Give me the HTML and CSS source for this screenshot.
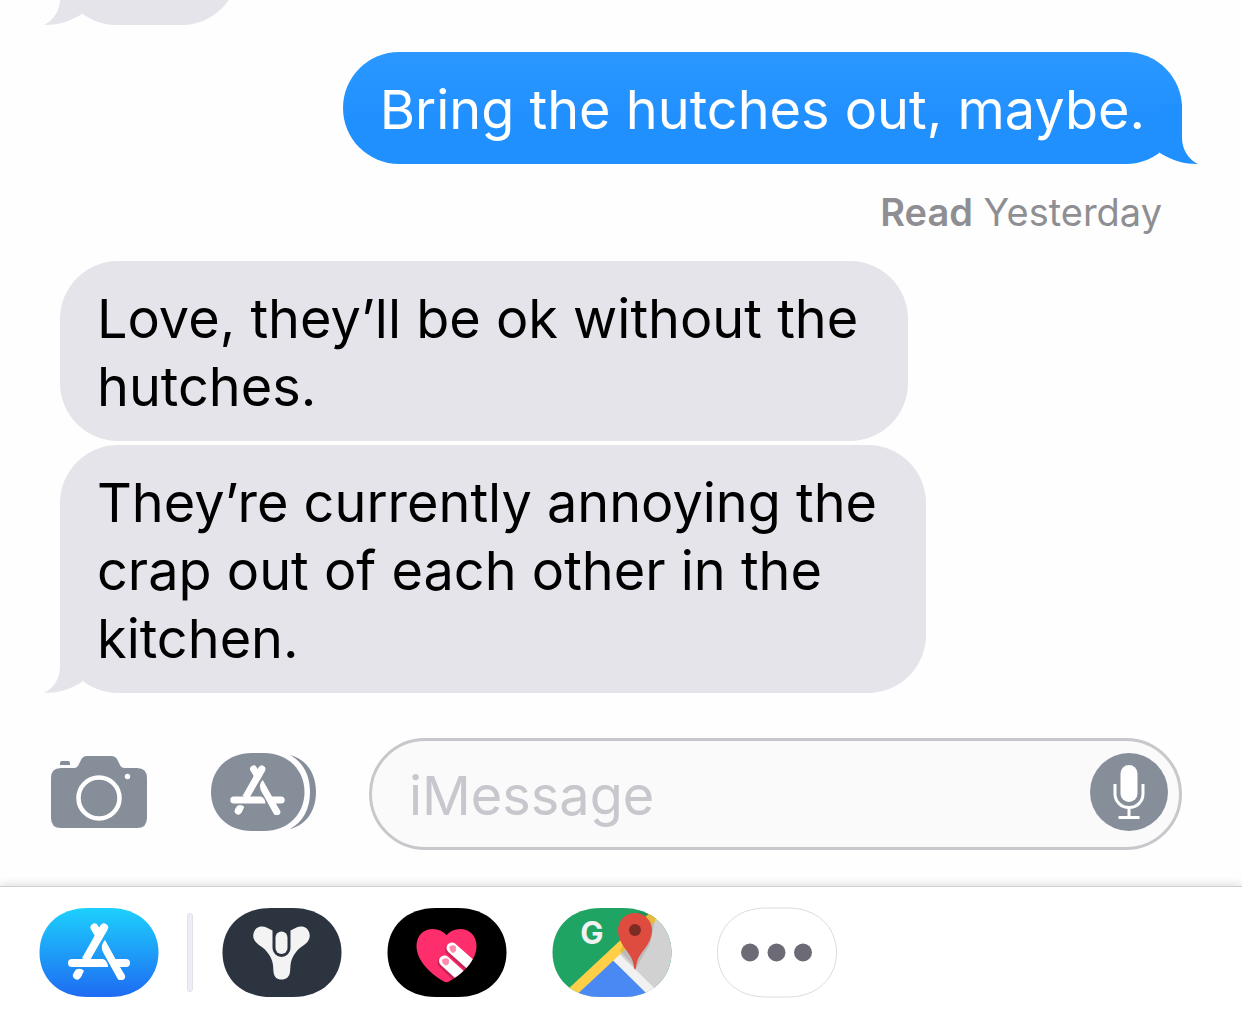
FILE: index.html
```html
<!DOCTYPE html>
<html lang="en">
<head>
  <meta charset="UTF-8">
  <meta name="viewport" content="width=device-width, initial-scale=1">
  <title>Messages</title>
  <link rel="stylesheet" href="styles.css">
</head>
<body>

  <!-- shared shapes -->
  <svg class="defs" aria-hidden="true">
    <defs>
      <symbol id="tail" viewBox="0 0 38 60">
        <path d="M16 0V34C16 45 10 55 0 60C14 60 25 57 38 49V0z"/>
      </symbol>
      <symbol id="store" viewBox="0 0 62 57">
        <g fill="none" stroke="currentColor" stroke-width="8" stroke-linecap="round">
          <path d="M26.500 4.500L31 12"/>
          <path d="M36 4.500L17.500 37" stroke-linecap="butt"/>
          <path d="M36 4.500L30 15"/>
          <path d="M9 52.500L10 51"/>
        </g>
        <g fill="currentColor">
          <path d="M4 36H35C38 37 40 40 40 44H4a4 4 0 0 1 0-8z"/>
          <path d="M8 46.500C11 45 14 45.500 16 48L12.500 54.500L5.500 50.500z"/>
          <path d="M37 17L47.500 36H58a4 4 0 0 1 0 8H52L56.500 51.500A4 4 0 0 1 49.500 55.500L36 31C33 26 33 21 37 17z"/>
        </g>
      </symbol>
      <path id="pill" d="M49 0H71C100 0 119.500 19 119.500 44.500S100 89 71 89H49C19 89 .5 70 .5 44.500S19 0 49 0z"/>
      <clipPath id="pillClip"><use href="#pill"/></clipPath>
      <linearGradient id="storeFill" x1="0" y1="0" x2="0" y2="1">
        <stop offset="0" stop-color="#1dd0fd"/>
        <stop offset="1" stop-color="#1e6bf2"/>
      </linearGradient>
    </defs>
  </svg>

  <main class="thread">
    <div class="cut">
      <div class="bubble received short"><svg class="tail"><use href="#tail"/></svg></div>
    </div>

    <div class="bubble sent">Bring the hutches out, maybe.<svg class="tail"><use href="#tail"/></svg></div>
    <p class="status"><strong>Read</strong> Yesterday</p>

    <div class="bubble received">Love, they’ll be ok without the hutches.</div>
    <div class="bubble received wide">They’re currently annoying the crap out of each other in the kitchen.<svg class="tail"><use href="#tail"/></svg></div>
  </main>

  <form class="composer">
    <button type="button" class="icon-btn camera" aria-label="Camera">
      <svg width="96" height="72" viewBox="0 0 96 72">
        <path fill="#868e99" d="M10 12H23C26 12 27 10 28 8L30 4C31.500 1 33 0 36 0H60C63 0 65 1 66.500 4L68.500 8C70 11 71 12 74 12H86Q96 12 96 22V62Q96 72 86 72H10Q0 72 0 62V22Q0 12 10 12z"/>
        <path fill="#868e99" d="M9 9V7Q9 5 11 5H17Q19 5 19 7V9z"/>
        <circle cx="48" cy="42" r="20.500" fill="none" stroke="#fff" stroke-width="4.500"/>
        <circle cx="76.500" cy="20.500" r="2.700" fill="#fff"/>
      </svg>
    </button>
    <button type="button" class="icon-btn apps" aria-label="Apps">
      <svg width="105" height="78" viewBox="0 0 105 78">
        <path fill="#868e99" d="M41 0H53C77 0 93.500 17 93.500 39S77 78 53 78H41C16 78 0 61 0 39S16 0 41 0z"/>
        <path fill="#868e99" d="M79 2C95 6 105 20 105 39S95 72 79 76C92 69 99 56 99 39S92 9 79 2z"/>
        <use href="#store" x="19" y="12" width="55" height="50" color="#fff"/>
      </svg>
    </button>
    <div class="field">
      <input type="text" placeholder="iMessage" aria-label="iMessage">
      <button type="button" class="icon-btn" aria-label="Record audio">
        <svg width="78" height="78" viewBox="0 0 78 78">
          <circle cx="39" cy="39" r="39" fill="#868e99"/>
          <rect x="30.500" y="12" width="17" height="37" rx="8.500" fill="#fff"/>
          <path d="M25 31V41A14 13.500 0 0 0 53 41V31M39 54.500V64M28.500 64.500H49.500" fill="none" stroke="#fff" stroke-width="3"/>
        </svg>
      </button>
    </div>
  </form>

  <nav class="drawer">
    <button type="button" class="icon-btn" aria-label="App Store">
      <svg width="120" height="89" viewBox="0 0 120 89">
        <use href="#pill" fill="url(#storeFill)"/>
        <use href="#store" x="29" y="15" width="62" height="57" color="#fff"/>
      </svg>
    </button>
    <span class="divider"></span>
    <div class="apps-list">
      <button type="button" class="icon-btn" aria-label="Destiny">
        <svg width="120" height="89" viewBox="0 0 120 89">
          <use href="#pill" fill="#2c3440"/>
          <path fill="#f3f3f3" d="M50.500 22.500L44.500 19.500C40 17.500 34 18.500 32 24C30 29 32 33.500 37 37C45 42 50 49 51 57L51.500 64C52 69 55 71.500 59.500 71.500S67.500 69 68 64L68.500 57C69.500 49 74 42 82 37C87 33.500 89 29 87 24C85 18.500 79 17.500 74.500 19.500L68.500 22.500V40A9 9 0 0 1 50.500 40z"/>
          <rect x="52" y="22" width="15" height="25.500" rx="7.500" fill="#2c3440"/>
          <rect x="53.500" y="23.500" width="12" height="22.500" rx="6" fill="#f3f3f3"/>
        </svg>
      </button>
      <button type="button" class="icon-btn" aria-label="Digital Touch">
        <svg width="120" height="89" viewBox="0 0 120 89">
          <defs>
            <path id="heart" d="M59.500 27C56 23 51 21 46 21C36 21 29.500 28 29.500 38C29.500 53 44 66 57 73.500Q59.500 75 62 73.500C75 66 89.500 53 89.500 38C89.500 28 83 21 73 21C68 21 63 23 59.500 27z"/>
            <clipPath id="heartClip"><use href="#heart"/></clipPath>
          </defs>
          <use href="#pill" fill="#000"/>
          <use href="#heart" fill="#fe2d6b"/>
          <g clip-path="url(#heartClip)" stroke-linecap="round">
            <path d="M63.500 41.500L91 67M56 54.500L81 79" stroke="#c92458" stroke-width="11"/>
            <path d="M65 40L93 65M57.500 53L84 77" stroke="#fff" stroke-width="11"/>
            <path d="M63 39.500Q62.500 37.500 65 38Q69 37 68.500 40.500Q69.500 44 65.500 44.500Q63 43.500 63 39.500zM55.500 52.500Q55.500 50.500 58 51Q62 50 61.500 53.500Q62 57 58.500 57Q55.500 56 55.500 52.500z" fill="#ff8cae" stroke="#ff8cae" stroke-width="1"/>
          </g>
        </svg>
      </button>
      <button type="button" class="icon-btn" aria-label="Google Maps">
        <svg width="120" height="89" viewBox="0 0 120 89">
          <g clip-path="url(#pillClip)">
            <rect width="120" height="89" fill="#20a464"/>
            <path d="M21 89L101 12L120 0V89z" fill="#d1d1d1"/>
            <path d="M60 51L22 89H98z" fill="#4a89f3"/>
            <path d="M63 48L105 89" stroke="#f1f1f1" stroke-width="9"/>
            <path d="M15 89L106 4" stroke="#ffcf48" stroke-width="10"/>
            <path d="M87 3L104 7L98 36L84 60L68 43z" fill="#000" opacity=".1"/>
          </g>
          <path d="M83 61.500C82 61.500 82 58 81 54C78 43 66 37 66 22A17 17 0 0 1 100 22C100 37 88 43 85 54C84 58 84 61.500 83 61.500z" fill="#de4c40"/>
          <circle cx="83" cy="22" r="6" fill="#7d2b25"/>
          <text class="g" x="40" y="36" text-anchor="middle">G</text>
        </svg>
      </button>
      <button type="button" class="icon-btn" aria-label="More">
        <svg class="more" width="120" height="89" viewBox="0 0 120 89">
          <use href="#pill" fill="#fff" stroke="#dcdcdf"/>
          <g fill="#6b6a75">
            <circle cx="33" cy="44.500" r="9"/>
            <circle cx="59.500" cy="44.500" r="9"/>
            <circle cx="86" cy="44.500" r="9"/>
          </g>
        </svg>
      </button>
    </div>
  </nav>

</body>
</html>
```

FILE: styles.css
```css
* {
  box-sizing: border-box;
}
body {
  margin: 0;
  min-height: 100vh;
  display: flex;
  flex-direction: column;
  background: #fefefe;
  color: #000;
  font-family: Inter, "Liberation Sans", sans-serif;
  font-size: 54px;
  line-height: 68px;
}
.defs {
  position: absolute;
  width: 0;
  height: 0;
}

/* conversation */
.thread {
  display: flex;
  flex-direction: column;
  align-items: flex-start;
}
.cut {
  width: 100%;
  height: 25px;
  margin-bottom: 27px;
  overflow: hidden;
  display: flex;
  align-items: flex-end;
}
.bubble {
  position: relative;
  flex-shrink: 0;
  max-width: 848px;
  margin: 0 60px 4px;
  padding: 24px 37px 20px;
  border-radius: 58px;
}
.received {
  background: #e5e4ea;
}
.wide {
  max-width: 866px;
  margin-bottom: 0;
}
.short {
  width: 178px;
  height: 112px;
  margin-bottom: 0;
}
.sent {
  align-self: flex-end;
  margin-bottom: 0;
  background: linear-gradient(#2a98ff, #2190ff 60%);
  color: #fff;
}
.tail {
  position: absolute;
  bottom: 0;
  left: -16px;
  width: 38px;
  height: 60px;
  fill: #e5e4ea;
}
.sent .tail {
  left: auto;
  right: -16px;
  fill: #2190ff;
  transform: scaleX(-1);
}
.status {
  align-self: flex-end;
  margin: 0 80px 0 0;
  padding: 24px 0 25px;
  color: #8e8e93;
  font-size: 38px;
  line-height: 48px;
}
.status strong {
  font-weight: 600;
}

/* message box */
.composer {
  display: flex;
  align-items: center;
  padding: 45px 60px 36px 51px;
}
.icon-btn {
  flex-shrink: 0;
  padding: 0;
  border: none;
  background: none;
  cursor: pointer;
}
.icon-btn svg {
  display: block;
}
.composer .icon-btn {
  margin-bottom: 4px;
}
.camera {
  margin-right: 64px;
}
.apps {
  margin-right: 53px;
}
.field {
  flex: 1;
  min-width: 0;
  height: 112px;
  display: flex;
  align-items: center;
  padding: 0 11px 0 37px;
  border: 3px solid #c8c7cc;
  border-radius: 56px;
  background: #fafafa;
}
.field input {
  flex: 1;
  min-width: 0;
  padding: 3px 0 0;
  border: none;
  outline: none;
  background: none;
  color: #000;
  font: inherit;
}
.field input::placeholder {
  color: #c7c7cd;
  opacity: 1;
}

/* app strip */
.drawer {
  flex: 1;
  display: flex;
  align-items: flex-start;
  padding: 21px 39px 20px;
  border-top: 1px solid #cfcfcf;
  background: #fff;
  box-shadow: 0 -2px 8px rgba(0, 0, 0, 0.12);
}
.divider {
  width: 6px;
  height: 79px;
  margin: 5px 29px 0 28px;
  border: 1px solid #e2e1e9;
  border-radius: 3px;
  background: #eeedf5;
}
.apps-list {
  display: flex;
  gap: 45px;
}
.more {
  overflow: visible;
}
.g {
  fill: #f1f1f1;
  font-family: Inter, sans-serif;
  font-size: 31px;
  font-weight: 700;
}
```
